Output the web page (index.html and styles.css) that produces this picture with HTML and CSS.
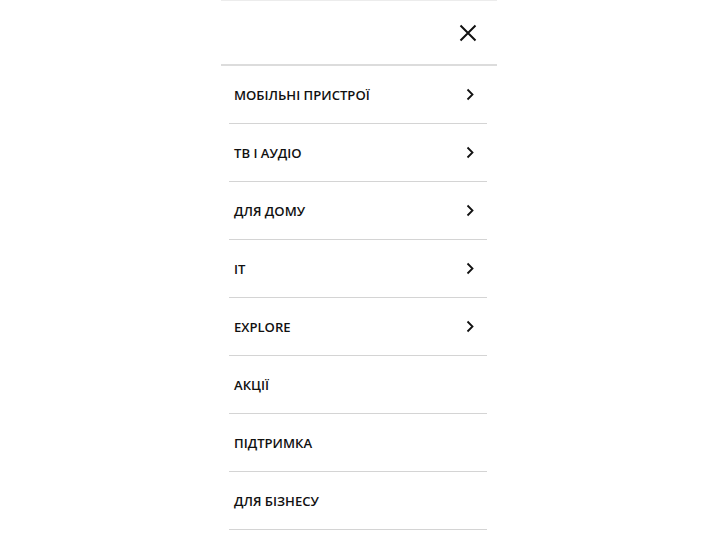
FILE: index.html
```html
<!DOCTYPE html>
<html lang="uk">
<head>
<meta charset="utf-8">
<link rel="stylesheet" href="styles.css">
</head>
<body>
<nav class="panel">
  <div class="header">
    <button class="close" aria-label="Закрити">
      <svg width="18" height="18" viewBox="0 0 18 18"><path d="M1.5 1.5L16.5 16.5M16.5 1.5L1.5 16.5" stroke="#111" stroke-width="2" fill="none"/></svg>
    </button>
  </div>
  <ul class="menu">
    <li class="item"><span>МОБІЛЬНІ ПРИСТРОЇ</span><svg class="chev" width="8" height="13" viewBox="0 0 8 13"><path d="M1.5 1.5L6.5 6.5L1.5 11.5" stroke="#111" stroke-width="1.8" fill="none"/></svg></li>
    <li class="item"><span>ТВ І АУДІО</span><svg class="chev" width="8" height="13" viewBox="0 0 8 13"><path d="M1.5 1.5L6.5 6.5L1.5 11.5" stroke="#111" stroke-width="1.8" fill="none"/></svg></li>
    <li class="item"><span>ДЛЯ ДОМУ</span><svg class="chev" width="8" height="13" viewBox="0 0 8 13"><path d="M1.5 1.5L6.5 6.5L1.5 11.5" stroke="#111" stroke-width="1.8" fill="none"/></svg></li>
    <li class="item"><span>IT</span><svg class="chev" width="8" height="13" viewBox="0 0 8 13"><path d="M1.5 1.5L6.5 6.5L1.5 11.5" stroke="#111" stroke-width="1.8" fill="none"/></svg></li>
    <li class="item"><span>EXPLORE</span><svg class="chev" width="8" height="13" viewBox="0 0 8 13"><path d="M1.5 1.5L6.5 6.5L1.5 11.5" stroke="#111" stroke-width="1.8" fill="none"/></svg></li>
    <li class="item"><span>АКЦІЇ</span></li>
    <li class="item"><span>ПІДТРИМКА</span></li>
    <li class="item"><span>ДЛЯ БІЗНЕСУ</span></li>
  </ul>
</nav>
</body>
</html>
```
FILE: styles.css
```css
html, body {
  margin: 0;
  padding: 0;
  background: #fff;
}
body {
  font-family: "Open Sans", "Noto Sans", sans-serif;
  color: #111;
}
.panel {
  width: 276px;
  margin-left: 221px;
  border-top: 1px solid #ececec;
}
.header {
  height: 63px;
  border-bottom: 2px solid #dcdcdc;
  display: flex;
  justify-content: flex-end;
  align-items: center;
}
.close {
  background: none;
  border: 0;
  padding: 0;
  margin-right: 20px;
  margin-top: 1px;
  width: 18px;
  height: 18px;
  display: block;
}
.close svg { display: block; }
.menu {
  list-style: none;
  margin: 0 10px 0 8px;
  padding: 0;
}
.item {
  height: 57px;
  border-bottom: 1px solid #d4d4d4;
  display: flex;
  align-items: center;
  justify-content: space-between;
  padding: 0 13px 0 5px;
  font-size: 13.1px;
  font-weight: 600;
  letter-spacing: 0;
}
.item span { margin-top: 1px; }
.chev { display: block; }
```
